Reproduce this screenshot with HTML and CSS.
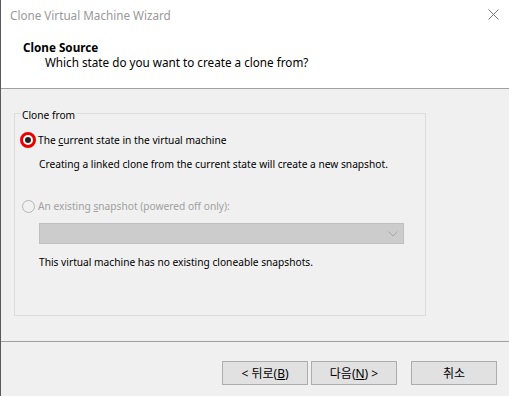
FILE: index.html
```html
<!DOCTYPE html>
<html lang="ko">
<head>
  <meta charset="UTF-8" />
  <title>Clone Virtual Machine Wizard</title>
  <link rel="stylesheet" href="styles.css">
</head>
<body>
  <div class="window">
    <header>
      <div class="titlebar">
        <span class="title">Clone Virtual Machine Wizard</span>
        <svg class="close" width="11" height="11" viewBox="0 0 11 11">
          <path d="M0.5 0.5 L10.5 10.5 M10.5 0.5 L0.5 10.5" stroke="#777" stroke-width="1" fill="none"/>
        </svg>
      </div>
      <div class="page-head">
        <h1>Clone Source</h1>
        <p>Which state do you want to create a clone from?</p>
      </div>
    </header>

    <main>
      <fieldset class="group">
        <legend>Clone from</legend>

        <label class="option">
          <span class="radio checked"></span>
          <span>The <u>c</u>urrent state in the virtual machine</span>
        </label>
        <p class="note first">Creating a linked clone from the current state will create a new snapshot.</p>

        <label class="option disabled">
          <span class="radio"></span>
          <span>An existing <u>s</u>napshot (powered off only):</span>
        </label>
        <div class="select">
          <svg width="10" height="6" viewBox="0 0 10 6">
            <path d="M0.5 0.5 L5 5 L9.5 0.5" stroke="#a8a8a8" fill="none"/>
          </svg>
        </div>
        <p class="note">This virtual machine has no existing cloneable snapshots.</p>
      </fieldset>
    </main>

    <footer>
      <button>&lt; 뒤로(<u>B</u>)</button>
      <button>다음(<u>N</u>) &gt;</button>
      <button class="cancel">취소</button>
    </footer>
  </div>
</body>
</html>
```

FILE: styles.css
```css
body {
  margin: 0;
  background: #f0f0f0;
  font-family: "Noto Sans", "Noto Sans CJK KR", sans-serif;
  font-size: 10.2px;
  color: #000;
}
.window {
  width: 508px;
  height: 396px;
  border-left: 1px solid #5a5a5a;
  display: flex;
  flex-direction: column;
}
header {
  background: #fff;
  height: 88px;
  border-bottom: 1px solid #a0a0a0;
  font-size: 11.7px;
}
.titlebar {
  height: 30px;
  display: flex;
  align-items: center;
  justify-content: space-between;
  padding: 0 10px 0 9px;
}
.title {
  color: #999;
}
.close {
  margin-top: -2px;
}
.page-head {
  padding: 9px 0 0 22px;
}
.page-head h1 {
  margin: 0;
  font-size: 11.7px;
  font-weight: bold;
  line-height: 16px;
}
.page-head p {
  margin: 0;
  padding-left: 22px;
  line-height: 15px;
}
main {
  height: 253px;
  padding: 15px 0 0 13px;
  border-bottom: 1px solid #a0a0a0;
  box-sizing: border-box;
}
.group {
  width: 412px;
  min-width: 0;
  height: 212px;
  box-sizing: border-box;
  margin: 0;
  padding: 10px 0 0 6px;
  border: 1px solid #dcdcdc;
}
.group legend {
  padding: 4px 1px 0;
  margin-left: 0;
}
.option {
  display: flex;
  align-items: center;
  gap: 2px;
  height: 16px;
  white-space: nowrap;
}
.option.disabled {
  color: #a0a0a0;
  margin-top: 26px;
  padding-left: 1px;
  gap: 3px;
}
.radio {
  width: 13px;
  height: 13px;
  border: 1px solid #b3b3b3;
  border-radius: 50%;
  box-sizing: border-box;
  background: #f0f0f0;
  display: inline-block;
}
.radio.checked {
  width: 16px;
  height: 16px;
  border: 3px solid #ec0000;
  background: #fff;
  position: relative;
  margin-left: -1px;
}
.radio.checked::after {
  content: "";
  position: absolute;
  left: 2px;
  top: 2px;
  width: 6px;
  height: 6px;
  border-radius: 50%;
  background: #222;
}
.note {
  margin: 0;
  padding-left: 18px;
  line-height: 16px;
  white-space: nowrap;
}
.note.first {
  margin-top: 8px;
}
.select {
  margin: 9px 0 0 18px;
  width: 365px;
  height: 21px;
  box-sizing: border-box;
  background: #cccccc;
  border: 1px solid #bfbfbf;
  display: flex;
  align-items: center;
  justify-content: flex-end;
  padding-right: 5px;
}
.select + .note {
  margin-top: 10px;
}
footer {
  display: flex;
  padding: 19px 0 0 221px;
  gap: 3px;
}
footer button {
  width: 86px;
  height: 24px;
  background: #e1e1e1;
  border: 1px solid #adadad;
  font-family: inherit;
  font-size: 12px;
  padding: 0;
  color: #000;
}
footer .cancel {
  margin-left: 11px;
}
```
